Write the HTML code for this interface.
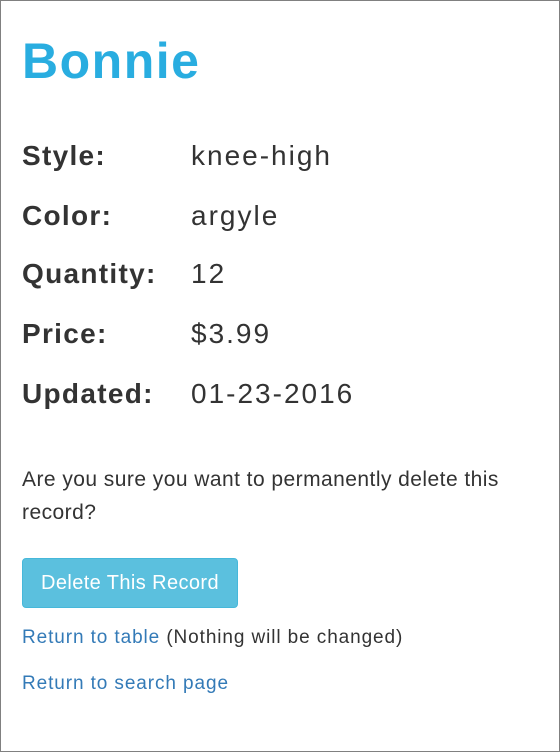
<!DOCTYPE html>
<html><head><style>
html,body{margin:0;padding:0}
body{width:560px;height:752px;box-sizing:border-box;border:1px solid #808080;position:relative;font-family:"Liberation Sans",sans-serif;color:#333;background:#fff;overflow:hidden}
.a{position:absolute;white-space:nowrap}
h1{position:absolute;left:21px;top:30px;margin:0;font-size:50px;font-weight:bold;color:#29ade0;line-height:60px;letter-spacing:1.5px}
.l{left:21px;font-weight:bold;font-size:28px;line-height:34px;letter-spacing:1.3px}
.v{left:190px;font-size:28px;line-height:34px;letter-spacing:2px}
p{position:absolute;left:21px;top:462px;margin:0;width:520px;font-size:21px;line-height:33px;color:#333;letter-spacing:0.45px}
.btn{position:absolute;left:21px;top:557px;width:216px;height:50px;background:#5bc0de;border:1px solid #46b8da;box-sizing:border-box;border-radius:4px;color:#fff;font-size:20px;text-align:center;line-height:48px;letter-spacing:0.4px}
.k{left:21px;font-size:19px;line-height:22px;letter-spacing:0.9px}
a{color:#337ab7;text-decoration:none}
</style></head><body>
<h1>Bonnie</h1>
<div class="a l" style="top:138px">Style:</div><div class="a v" style="top:138px">knee-high</div>
<div class="a l" style="top:198px">Color:</div><div class="a v" style="top:198px">argyle</div>
<div class="a l" style="top:256px">Quantity:</div><div class="a v" style="top:256px">12</div>
<div class="a l" style="top:316px">Price:</div><div class="a v" style="top:316px">$3.99</div>
<div class="a l" style="top:376px">Updated:</div><div class="a v" style="top:376px">01-23-2016</div>
<p>Are you sure you want to permanently delete this<br>record?</p>
<div class="btn">Delete This Record</div>
<div class="a k" style="top:626px"><a>Return to table</a> (Nothing will be changed)</div>
<div class="a k" style="top:672px"><a>Return to search page</a></div>
</body></html>
